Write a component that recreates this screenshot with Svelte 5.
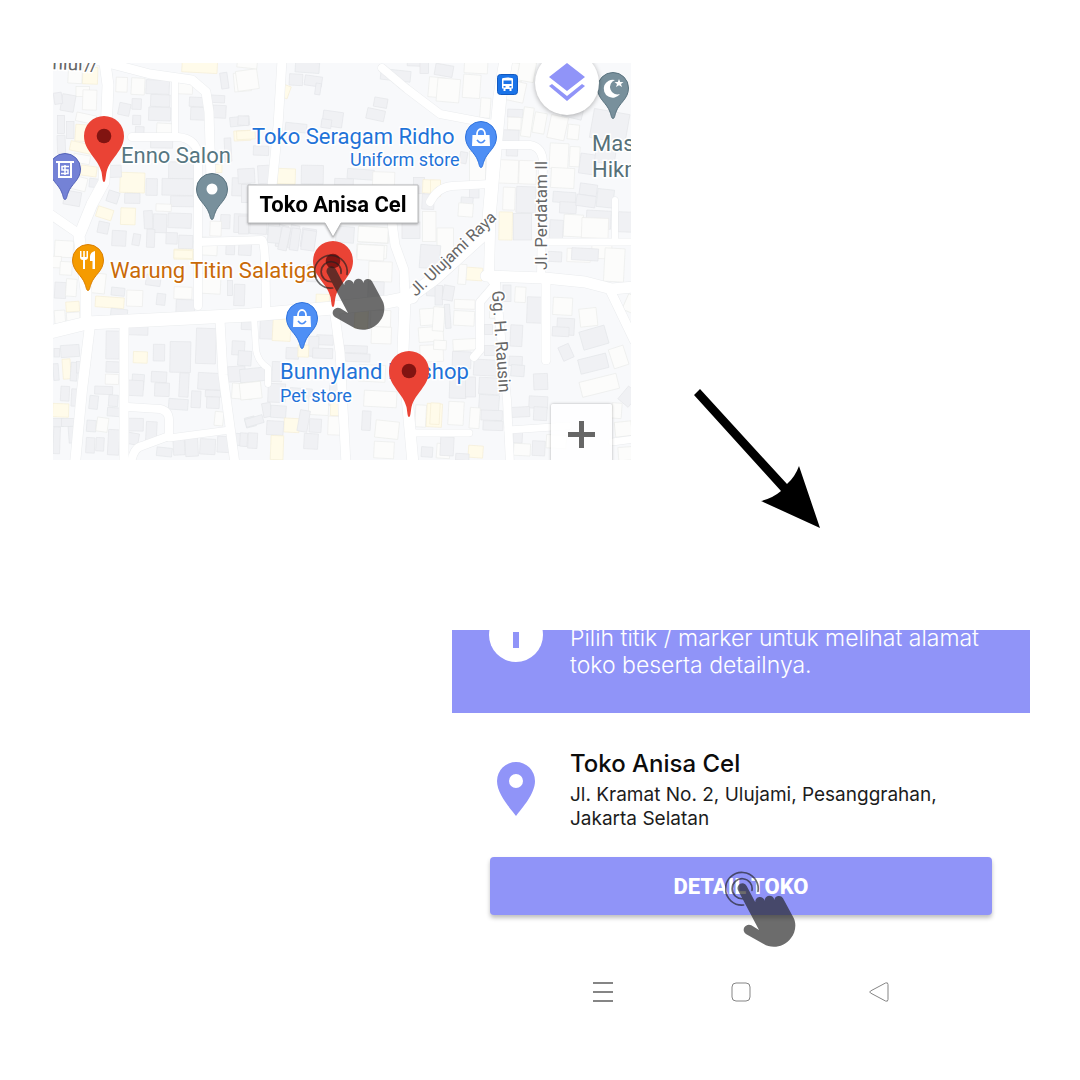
<script>
  // Road centre lines: [path, width]
  const roads = [
    ['M104 56 108 85 104 182 92 204 79 236 86 290 86 322', 11],
    ['M50 214 79 234', 9],
    ['M96 60 150 74 192 80 206 92 209 112 211 180', 9],
    ['M175 78V136', 6],
    ['M132 137H178Q197 139 198 156V306', 8],
    ['M198 242 262 240Q266 242 266 316', 8],
    ['M50 332 87 323 150 320 250 315 333 308 387 302 412 297', 13],
    ['M90 325 82 390 75 464', 10],
    ['M124 325V464', 9],
    ['M220 320 223 375 235 464', 9],
    ['M128 407 160 409Q169 411 169 420V436L142 446Q133 448 131 464', 8],
    ['M169 438 230 430', 7],
    ['M282 60 278 126 272 186', 9],
    ['M382 68 407 89 440 114 498 125', 8],
    ['M506 60 500 96 494 160 488 230 435 278 402 302', 13],
    ['M492 150 489 275 495 283', 10],
    ['M430 202Q438 187 452 186L490 184', 8],
    ['M500 145H530Q543 147 543 164L541 277', 8],
    ['M545 242H635', 7],
    ['M615 200V242', 6],
    ['M391 215 395 245 404 270 405 300', 9],
    ['M405 300 403 350 413 464', 11],
    ['M334 308 340 352 346 464', 9],
    ['M254 316 256 350Q258 362 268 368V384', 6],
    ['M415 433H469', 7],
    ['M486 276 545 278 585 282 612 289 635 287', 11],
    ['M609 288 634 340', 9],
    ['M546 280V360', 9],
    ['M493 287 480 302V350L474 357', 8],
    ['M496 284 507 400 510 464', 8],
    ['M508 430 568 426', 7],
    ['M612 442 634 439', 7]
  ];

  // Building outlines, grouped by map tile. Kind: g grey, w white, y yellow.
  // Each entry is [kind, x, y, width, height, tilt].
  const tiles = [
    { x: 50, y: 58, items: [
      ['y',98,28,45,50,2],['w',55,10,42,66,3],['w',78,86,40,30,0],['w',98,96,42,60,2],['g',34,110,40,50,10],['g',12,104,24,34,-8],
      ['g',22,172,22,54,0],['g',50,190,22,52,0],['g',22,232,24,54,-2],['w',78,168,60,26,12],['y',76,200,40,50,4],['y',60,256,80,28,12],['w',70,290,50,26,10],['y',92,324,48,30,8],['w',60,356,50,40,14],['g',118,362,28,26,6],['g',42,400,50,42,10],
      ['w',198,58,34,44,2],['w',244,60,40,50,3],['g',288,66,70,42,2],['g',302,110,58,36,2],['g',296,148,66,40,2],['g',246,122,28,32,2],['g',206,136,34,36,12],['g',248,172,24,28,2],['g',256,206,26,30,2],['w',320,196,48,36,3],['g',302,236,66,34,1],
      ['y',396,6,106,38,3],['w',380,62,48,46,2],['g',418,118,46,28,3],['g',422,148,46,38,2],['g',482,112,42,22,3],['g',488,142,40,38,3],['g',512,44,22,48,-8],['w',552,44,50,56,-5],['g',540,176,58,28,-6],['y',552,218,50,30,-3],['g',524,240,20,70,-3],
      ['y',210,344,74,60,2],['g',174,322,40,36,-2],['g',172,400,34,34,18],['g',224,406,46,30,1],['g',288,362,34,50,1],['g',356,312,76,50,1],['g',336,362,94,50,1],['g',362,414,70,32,1],['w',318,438,46,22,2],
      ['y',140,450,48,32,18],['y',212,450,44,50,2],['g',144,492,32,34,12],['g',186,518,42,46,3],['g',248,528,22,34,10],['g',282,458,26,54,-3],['g',310,468,40,56,2],['g',354,466,70,44,2],['g',290,514,24,54,2],['g',348,524,34,34,2],['g',386,532,42,40,2],['y',372,574,60,30,1],
      ['y',482,320,34,24,0],['g',512,470,28,42,2],['g',552,468,50,56,2],['w',480,490,34,44,2],['w',452,538,50,54,3],['g',528,550,26,40,2],['g',566,556,38,36,3],['w',14,548,56,50,3],['g',546,360,54,54,2]
    ] },
    { x: 240, y: 58, items: [
      ['w',-10,36,64,60,-8],['w',-8,-4,60,34,6],['g',166,12,72,32,4],['g',148,48,40,34,3],['g',194,54,52,30,8],['g',226,76,16,34,8],['y',126,82,22,38,20],['g',-6,174,32,28,3],['y',-10,218,56,26,-3],['g',40,264,46,28,2],
      ['g',248,160,60,46,8],['g',244,184,30,26,8],['g',136,196,64,26,6],['g',402,120,40,28,10],['g',380,154,54,32,12],['g',422,36,90,32,6],['g',502,4,40,20,2],['w',566,58,48,60,5],['g',540,6,26,40,0],
      ['g',-6,332,50,44,-3],['g',54,322,52,54,-3],['y',112,332,54,46,2],['g',184,322,66,56,1],['g',322,334,80,30,4],['g',284,362,56,20,2],['w',398,342,66,40,2],['g',520,358,34,48,0],['y',548,366,52,40,3],['g',546,408,36,46,2],['g',4,380,44,54,0],
      ['g',-4,474,30,54,0],['g',30,484,50,44,3],['g',84,480,34,52,8],['g',112,502,28,66,12],['g',148,502,26,70,10],['g',184,512,42,56,8],['g',288,506,54,48,4],['w',356,506,90,48,3],['g',486,492,54,50,0],['w',548,460,40,90,0],['w',350,560,90,40,3]
    ] },
    { x: 435, y: 58, items: [
      ['w',6,62,68,70,5],['g',0,20,54,34,10],['w',88,4,70,42,3],['w',84,50,52,70,4],['w',136,120,30,60,4],['w',202,14,60,54,6],['w',210,70,60,60,12],['w',250,10,50,60,10],
      ['g',218,154,46,24,2],['w',218,178,40,38,2],['w',262,148,30,88,8],['w',296,164,36,62,10],['w',342,174,52,70,12],['w',398,200,34,44,6],['g',470,160,108,88,10],['g',384,140,60,40,14],
      ['g',214,270,34,24,2],['w',190,306,60,70,2],['w',252,308,52,70,2],['g',200,216,52,34,2],['w',344,256,56,76,3],['w',348,330,70,60,3],['w',404,266,30,60,3],['g',434,288,46,60,8],['g',482,256,60,60,8],
      ['g',74,282,22,34,10],['w',104,280,48,90,0],['g',104,386,28,34,0],['g',78,418,36,26,4],['w',70,436,44,40,4],['w',204,388,36,68,2],['g',244,386,58,78,2],['y',192,462,40,84,1],['g',236,466,54,80,0],
      ['g',354,402,68,32,4],['g',374,432,50,34,3],['g',434,378,52,34,8],['g',424,412,58,34,8],['g',486,394,50,54,6],['w',386,470,58,66,3],['g',344,486,40,56,3],['g',454,458,74,54,3],['g',550,462,44,60,2],['w',440,480,80,60,2],['w',396,572,70,40,2],['w',470,562,60,40,2],['y',-14,366,30,50,0],['w',6,510,50,90,0]
    ] },
    { x: 50, y: 255, items: [
      ['w',-6,4,40,34,2],['w',30,20,36,40,3],['g',14,82,34,48,3],['w',48,72,32,52,4],['y',48,140,40,30,-4],['w',14,166,32,50,-4],['w',50,172,40,34,-4],['w',104,54,62,60,6],
      ['g',184,98,40,24,6],['y',136,126,86,32,4],['g',182,162,50,30,6],['w',230,106,48,48,2],['g',320,116,26,34,6],['w',372,96,54,36,2],['g',378,134,56,56,2],['w',448,56,64,60,3],['g',552,88,32,64,2],['g',532,76,16,46,0],['g',288,60,44,32,8],['y',372,-14,56,24,2],
      ['g',168,228,40,84,1],['g',228,206,66,34,2],['g',438,220,60,106,2],['g',360,260,62,92,1],['g',310,268,34,50,1],['y',250,290,42,34,2],['g',168,320,40,32,2],['w',166,358,40,30,2],['g',134,394,54,24,2],['g',118,422,26,40,6],['g',176,420,28,34,4],['g',172,458,42,26,4],
      ['g',12,280,16,26,0],['g',32,270,56,36,-4],['y',38,312,24,60,-4],['g',62,322,20,56,4],['g',80,320,22,34,0],['g',10,326,16,50,-4],['g',32,394,26,44,3],['g',64,402,28,52,3],['y',8,446,48,40,2],['g',8,490,32,24,0],['g',34,490,40,24,0],['g',10,516,20,80,2],['g',56,514,18,50,-4],
      ['g',246,358,36,46,4],['g',226,376,54,46,3],['g',304,350,46,32,3],['g',314,384,44,40,2],['g',388,354,28,72,3],['g',356,432,58,32,4],['g',424,408,28,50,3],['g',444,354,70,50,3],['g',466,406,46,20,2],['g',470,426,38,34,2],['w',494,470,26,42,6],
      ['g',228,490,52,38,1],['g',288,500,32,64,3],['g',230,534,36,34,10],['g',110,496,28,34,4],['w',140,488,34,42,8],['g',108,548,26,46,3],['g',138,548,24,40,3],['g',174,524,34,76,3],['g',320,578,46,26,6],['g',370,554,34,46,-3],['g',406,548,38,56,-3],['g',450,552,46,46,3],['g',502,544,36,48,3],['g',554,536,36,36,4],
      ['g',546,258,38,42,3],['g',534,334,52,46,-3],['w',546,386,60,46,4],['g',574,200,36,24,2],['g',586,486,30,30,-14]
    ] },
    { x: 240, y: 225, items: [
      ['g',84,4,38,50,5],['g',120,6,26,70,12],['g',152,10,26,66,8],['g',186,16,40,60,8],['w',354,6,90,46,3],['w',352,60,80,46,3],['y',228,208,40,34,2],['w',386,110,70,60,2],['g',384,170,48,50,2],['g',200,120,30,50,3],['g',540,60,60,70,4],['g',560,184,60,30,4],
      ['g',60,284,40,58,2],['y',98,282,54,66,3],['w',392,256,60,50,2],['w',394,306,60,50,2],['y',344,254,40,56,3],['g',230,330,50,30,2],['g',206,334,30,60,2],['g',138,368,38,34,2],['y',174,360,32,36,2],['g',218,370,60,30,2],['g',312,362,70,22,2],['g',310,386,80,24,2],
      ['w',540,250,70,50,-4],['w',536,306,74,44,-4],['w',540,360,70,50,-2],['g',-6,378,40,44,4],['g',0,430,76,40,-6],['g',96,410,30,60,2],['g',84,476,52,56,2],['w',0,472,64,50,-6],['g',150,490,66,34,4],['w',206,516,60,54,3],['g',268,476,44,66,3],
      ['g',16,576,54,24,-16],['g',68,534,26,42,-10],['g',92,542,46,36,4],['y',132,580,46,42,3],['g',80,588,50,42,3],['g',176,556,30,64,10],['g',208,582,36,40,3],['y',272,512,40,60,2],['w',264,574,46,56,2],['g',24,624,28,46,3],['g',0,624,22,40,3],['y',92,632,38,72,2],['g',192,626,42,46,3],
      ['w',372,498,98,48,3],['g',366,558,26,58,3],['w',406,588,70,52,6],['w',402,650,60,50,3],['w',526,540,32,66,3],['y',560,536,46,70,3],['g',544,666,34,30,4],['w',590,656,40,44,4],['w',356,420,80,50,3]
    ] },
    { x: 435, y: 255, items: [
      ['g',340,-10,40,30,3],['g',410,-20,80,36,3],['w',508,-20,60,100,3],['y',92,38,50,38,4],['w',70,28,24,60,4],['g',0,92,22,58,0],['g',24,92,32,44,10],['w',-6,156,34,72,4],['g',30,148,16,72,-4],['w',58,134,62,28,2],['w',56,168,62,44,3],['w',-4,256,38,28,3],['w',54,252,80,34,-3],['g',52,290,56,50,2],
      ['g',204,90,24,50,0],['w',240,96,32,46,3],['g',276,126,50,78,2],['w',354,128,58,52,3],['g',366,190,52,50,3],['g',352,216,50,28,3],['w',434,160,52,54,-6],['g',438,220,78,56,-16],['g',376,270,34,44,-24],['g',432,304,86,44,-14],['w',436,368,114,46,-14],['g',226,210,36,64,3],['g',148,208,24,30,0],['w',164,160,28,30,3],['g',148,272,50,30,0],
      ['g',222,304,40,28,2],['g',228,330,40,34,4],['g',116,314,72,48,3],['g',132,368,62,50,3],['g',132,420,60,48,4],['g',138,466,64,30,2],['g',144,498,60,28,2],['g',296,356,42,48,-2],['g',282,424,56,36,3],['g',296,456,40,40,3],['g',230,456,54,30,-3],
      ['g',44,340,50,90,2],['g',92,366,30,60,0],['w',40,440,46,70,3],['w',104,458,30,62,4],['y',-14,444,28,64,3],['g',16,546,40,56,3],['y',100,572,44,36,4],['g',62,596,40,20,3],['g',234,530,28,34,3],['w',236,566,50,36,3],['g',292,558,38,44,3],['w',334,540,60,40,3],
      ['w',528,276,46,60,-18],['w',570,120,30,50,24],['g',560,400,40,50,40],['w',530,444,30,46,4],['w',540,500,50,44,-6],['w',550,576,46,40,-4]
    ] }
  ];

  const places = [
    { x: 481, y: 137, color: '#4e8ff5', edge: '#2f73dd', icon: 'bag' },
    { x: 302, y: 318, color: '#4e8ff5', edge: '#2f73dd', icon: 'bag' },
    { x: 88, y: 260, color: '#f59b00', edge: '#db7f00', icon: 'food' },
    { x: 65, y: 169, color: '#7482d6', edge: '#5362b8', icon: 'pawn' },
    { x: 212, y: 189, color: '#78909c', edge: '#5a737f', icon: 'dot' },
    { x: 613, y: 88, color: '#78909c', edge: '#5a737f', icon: 'mosque' }
  ];

  const markers = [
    { x: 104, y: 136 },
    { x: 333, y: 261 },
    { x: 409, y: 371 }
  ];
</script>

{#snippet tapHand()}
  <g fill="#212121" opacity="0.66">
    <path d="M56 105A49 49 0 1 1 99 64M54 86A30 30 0 1 1 81 61" fill="none" stroke="#212121" stroke-width="5" stroke-linecap="round" />
    <path d="M39 61A13 13 0 0 1 65 48L91 97A14 14 0 0 1 119 93A14 14 0 0 1 148 90A14 14 0 0 1 174 85L206 144C216 164 210 190 198 204C176 234 138 236 116 222L64 193A15 15 0 0 1 79 166L102 180Z" />
  </g>
{/snippet}

<main>
  <section class="top">
    <div class="map">
      <svg class="canvas" viewBox="53 63 578 397" role="img" aria-label="Peta toko">
        <rect x="53" y="63" width="578" height="397" fill="#f8f9fb" />
        {#each tiles as tile}
          <g transform="translate({tile.x} {tile.y}) scale(0.3333)">
            {#each tile.items as [kind, x, y, w, h, tilt]}
              <rect class={kind} {x} {y} width={w} height={h} transform="rotate({tilt} {x + w / 2} {y + h / 2})" />
            {/each}
          </g>
        {/each}
        {#each roads as [d, w]}
          <path {d} fill="none" stroke="#eaecee" stroke-width={w + 1} stroke-linejoin="round" stroke-linecap="round" />
        {/each}
        {#each roads as [d, w]}
          <path {d} fill="none" stroke="#fff" stroke-width={w} stroke-linejoin="round" stroke-linecap="round" />
        {/each}

        <g class="street">
          <text class="edge" transform="translate(42 69) rotate(2)">aniur//</text>
          <text class="slant" transform="translate(416 297) rotate(-44)">Jl. Ulujami Raya</text>
          <text transform="translate(547 270) rotate(-90)">Jl. Perdatam II</text>
          <text transform="translate(492 291) rotate(86)">Gg. H. Rausin</text>
        </g>

        {#each places as p}
          <g transform="translate({p.x} {p.y})">
            <path d="M0 30.500C-1.500 30.500-1.600 28-3 24C-6 15-15.500 11-15.500 0A15.500 15.500 0 0 1 15.500 0C15.500 11 6 15 3 24C1.600 28 1.500 30.500 0 30.500Z" fill={p.color} stroke={p.edge} />
            {#if p.icon === 'bag'}
              <path d="M-8.500-2H8.500L9 9H-9Z" fill="#fff" />
              <path d="M-4-1V-3A4 5 0 0 1 4-3V-1" fill="none" stroke="#fff" stroke-width="1.800" />
              <path d="M-4 3Q0 8.500 4 3" fill="none" stroke={p.color} stroke-width="1.600" />
            {:else if p.icon === 'food'}
              <path d="M-8-9V-3Q-8 0-5 0V9H-3V0Q0 0 0-3V-9H-1.500V-3H-3.200V-9H-4.800V-3H-6.500V-9ZM7-9Q2-8 2-3V1H4.500V9H7Z" fill="#fff" />
            {:else if p.icon === 'pawn'}
              <path d="M-9-7H9M-6-7V8H6V-7" fill="none" stroke="#fff" stroke-width="2" />
              <path d="M4-2.500H-3V1H3V4.500H-4M0-4V6" fill="none" stroke="#fff" stroke-width="1.500" />
            {:else if p.icon === 'dot'}
              <circle r="5.500" fill="#fff" />
            {:else}
              <path d="M2-8A9 9 0 1 0 7 6A7 7 0 1 1 2-8Z" fill="#fff" />
              <path d="M6-9 7.200-6H10.500L8-4 9-1 6-2.700 3-1 4-4 1.500-6H4.800Z" fill="#fff" />
            {/if}
          </g>
        {/each}

        <g transform="translate(497 74)">
          <rect x="0.500" y="0.500" width="20" height="20" rx="3" fill="#1a73e8" stroke="#1259c0" />
          <path d="M5 5Q5 3.500 10.500 3.500T16 5V14.500H14.500V17H12.500V15H8.500V17H6.500V14.500H5Z" fill="#fff" />
          <path d="M6.500 6.500H14.500V10H6.500ZM6.500 12H8.500V13.500H6.500ZM12.500 12H14.500V13.500H12.500Z" fill="#1a73e8" />
        </g>

        <g class="label">
          <text x="121" y="163" fill="#567681">Enno Salon</text>
          <text x="252" y="144" fill="#1f73d8">Toko Seragam Ridho</text>
          <text class="kind" x="350" y="166" fill="#1f73d8">Uniform store</text>
          <text x="110" y="278" fill="#c96a08">Warung Titin Salatiga</text>
          <text x="280" y="379" fill="#1f73d8">Bunnyland Petshop</text>
          <text class="kind" x="280" y="402" fill="#1f73d8">Pet store</text>
          <text x="592" y="151" fill="#567078">Masjid</text>
          <text x="592" y="177" fill="#567078">Hikmah</text>
        </g>

        {#each markers as m}
          <g transform="translate({m.x} {m.y})">
            <path d="M0 46C-1.500 46-1.600 41-2.500 36C-6 22-20 15-20 0A20 20 0 0 1 20 0C20 15 6 22 2.500 36C1.600 41 1.500 46 0 46Z" fill="#ea4335" />
            <circle r="7.300" fill="#811411" />
          </g>
        {/each}

        <g class="tip">
          <path d="M248 185H418V223H341L333 237 325 223H248Z" fill="#fff" stroke="#b9babc" />
          <text x="333" y="212" text-anchor="middle">Toko Anisa Cel</text>
        </g>

        <g transform="translate(314 253) scale(0.3333)">{@render tapHand()}</g>
      </svg>

      <button class="layers" aria-label="Lapisan peta">
        <svg width="36" height="40" viewBox="0 0 36 40"><path d="M18 0 36 14 18 28 0 14ZM0 23 3 21 18 33 33 21 36 23 18 38Z" fill="#9094f8" /></svg>
      </button>
      <button class="zoom" aria-label="Perbesar">
        <svg width="27" height="27" viewBox="0 0 27 27"><path d="M11 0H16V11H27V16H16V27H11V16H0V11H11Z" fill="#666" /></svg>
      </button>
    </div>

    <div class="pointer">
      <svg width="128" height="139" viewBox="0 0 128 139" aria-hidden="true">
        <path d="M1 6 7 0 94 95Q102 88 106 77L127 139 68 112Q80 109 88 102Z" />
      </svg>
    </div>
  </section>

  <section class="bottom">
    <article class="sheet">
      <header>
        <svg class="info" width="54" height="54" viewBox="0 0 54 54" aria-hidden="true">
          <circle cx="27" cy="27" r="27" fill="#fff" />
          <path d="M24 24H30V40H24ZM24 13H30V19H24Z" fill="#9094f8" />
        </svg>
        <p>Pilih titik / marker untuk melihat alamat toko beserta detailnya.</p>
      </header>

      <div class="store">
        <svg width="38" height="54" viewBox="0 0 38 54" aria-hidden="true">
          <path d="M19 0A19 19 0 0 1 38 19C38 32 25 46 19 54C13 46 0 32 0 19A19 19 0 0 1 19 0ZM19 12A7 7 0 0 0 19 26A7 7 0 0 0 19 12Z" fill="#9094f8" />
        </svg>
        <div>
          <h1>Toko Anisa Cel</h1>
          <address>Jl. Kramat No. 2, Ulujami, Pesanggrahan, Jakarta Selatan</address>
        </div>
      </div>

      <button class="detail">
        DETAIL TOKO
        <svg class="tap" width="74" height="79" viewBox="0 0 222 237" aria-hidden="true">{@render tapHand()}</svg>
      </button>

      <nav aria-label="Navigasi sistem">
        <button aria-label="Menu">
          <svg width="20" height="20" viewBox="0 0 20 20"><path d="M0 1H20M0 10H20M0 19H20" /></svg>
        </button>
        <button aria-label="Beranda">
          <svg width="20" height="20" viewBox="0 0 20 20"><rect x="1" y="1" width="18" height="18" rx="4" /></svg>
        </button>
        <button aria-label="Kembali">
          <svg width="20" height="20" viewBox="0 0 20 20"><path d="M1.500 9 16.500 1Q19 0 19 2.500V17.500Q19 20 16.500 19L1.500 11Q0 10 1.500 9Z" /></svg>
        </button>
      </nav>
    </article>
  </section>
</main>

<style>
  :global(body) {
    margin: 0;
    background: #fff;
  }

  main {
    padding: 63px 50px 50px 53px;
    font-family: Inter, Roboto, sans-serif;
  }

  button {
    border: 0;
    padding: 0;
    background: none;
    font: inherit;
    cursor: pointer;
  }

  .top {
    display: grid;
    grid-template-columns: 578fr 399fr;
    align-items: start;
  }

  .map {
    position: relative;
    overflow: hidden;
  }

  .canvas {
    display: block;
    width: 100%;
    font-family: Roboto, sans-serif;
  }

  .g {
    fill: #f0f1f4;
    stroke: #e4e6e9;
    stroke-width: 2px;
  }

  .w {
    fill: #fcfcfb;
    stroke: #ebecea;
    stroke-width: 2px;
  }

  .y {
    fill: #fffbea;
    stroke: #f5eed6;
    stroke-width: 2px;
  }

  .street {
    font-size: 17px;
    fill: #666;
    stroke: #fff;
    stroke-width: 3px;
    paint-order: stroke;
  }

  .slant {
    font-size: 16px;
  }

  .edge {
    font-size: 19px;
  }

  .label {
    font-size: 22px;
    stroke: #fff;
    stroke-width: 3px;
    paint-order: stroke;
  }

  .kind {
    font-size: 18px;
  }

  .tip {
    font-size: 22px;
    font-weight: 700;
    filter: drop-shadow(0 1px 1px rgba(0, 0, 0, 0.3));
  }

  .layers,
  .zoom {
    position: absolute;
    display: grid;
    place-items: center;
  }

  .layers {
    top: -12px;
    right: 32px;
    width: 64px;
    height: 64px;
    border-radius: 50%;
    background: #fff;
    box-shadow: 0 1px 5px rgba(0, 0, 0, 0.3);
  }

  .zoom {
    right: 19px;
    bottom: -5px;
    width: 61px;
    height: 61px;
    border-radius: 2px;
    background: rgba(255, 255, 255, 0.85);
    box-shadow: 0 0 3px rgba(0, 0, 0, 0.3);
  }

  .pointer {
    padding: 326px 0 0 62px;
  }

  .pointer svg {
    display: block;
  }

  .bottom {
    display: grid;
    grid-template-columns: 399fr 578fr;
    margin-top: 102px;
  }

  .sheet {
    grid-column: 2;
  }

  header {
    display: flex;
    align-items: flex-end;
    gap: 27px;
    height: 83px;
    padding: 0 38px 0 37px;
    box-sizing: border-box;
    overflow: hidden;
    background: #9094f8;
    color: #fff;
  }

  .info {
    flex: none;
    margin-bottom: 51px;
  }

  header p {
    margin: 0 0 34px;
    font-size: 23px;
    line-height: 27px;
    font-weight: 300;
  }

  .store {
    display: flex;
    align-items: center;
    gap: 35px;
    padding: 34px 38px 0 45px;
  }

  .store svg {
    flex: none;
  }

  h1 {
    margin: 0 0 2px;
    font-size: 24px;
    line-height: 34px;
    font-weight: 500;
    color: #0c0c0c;
  }

  address {
    font-size: 19px;
    line-height: 24px;
    font-style: normal;
    color: #1c1c1c;
  }

  .detail {
    position: relative;
    display: block;
    width: calc(100% - 76px);
    height: 58px;
    margin: 26px 38px 0;
    border-radius: 4px;
    background: #9094f8;
    color: #fff;
    font-family: Roboto, sans-serif;
    font-size: 22px;
    font-weight: 800;
    box-shadow: 0 3px 4px rgba(0, 0, 0, 0.25);
  }

  .tap {
    position: absolute;
    top: 13px;
    left: calc(50% - 16px);
    pointer-events: none;
  }

  nav {
    display: flex;
    justify-content: center;
    gap: 118px;
    margin-top: 67px;
  }

  nav svg {
    display: block;
    fill: none;
    stroke: #858585;
    stroke-width: 2px;
  }

  nav rect,
  nav button:last-child path {
    stroke-width: 1px;
  }
</style>
